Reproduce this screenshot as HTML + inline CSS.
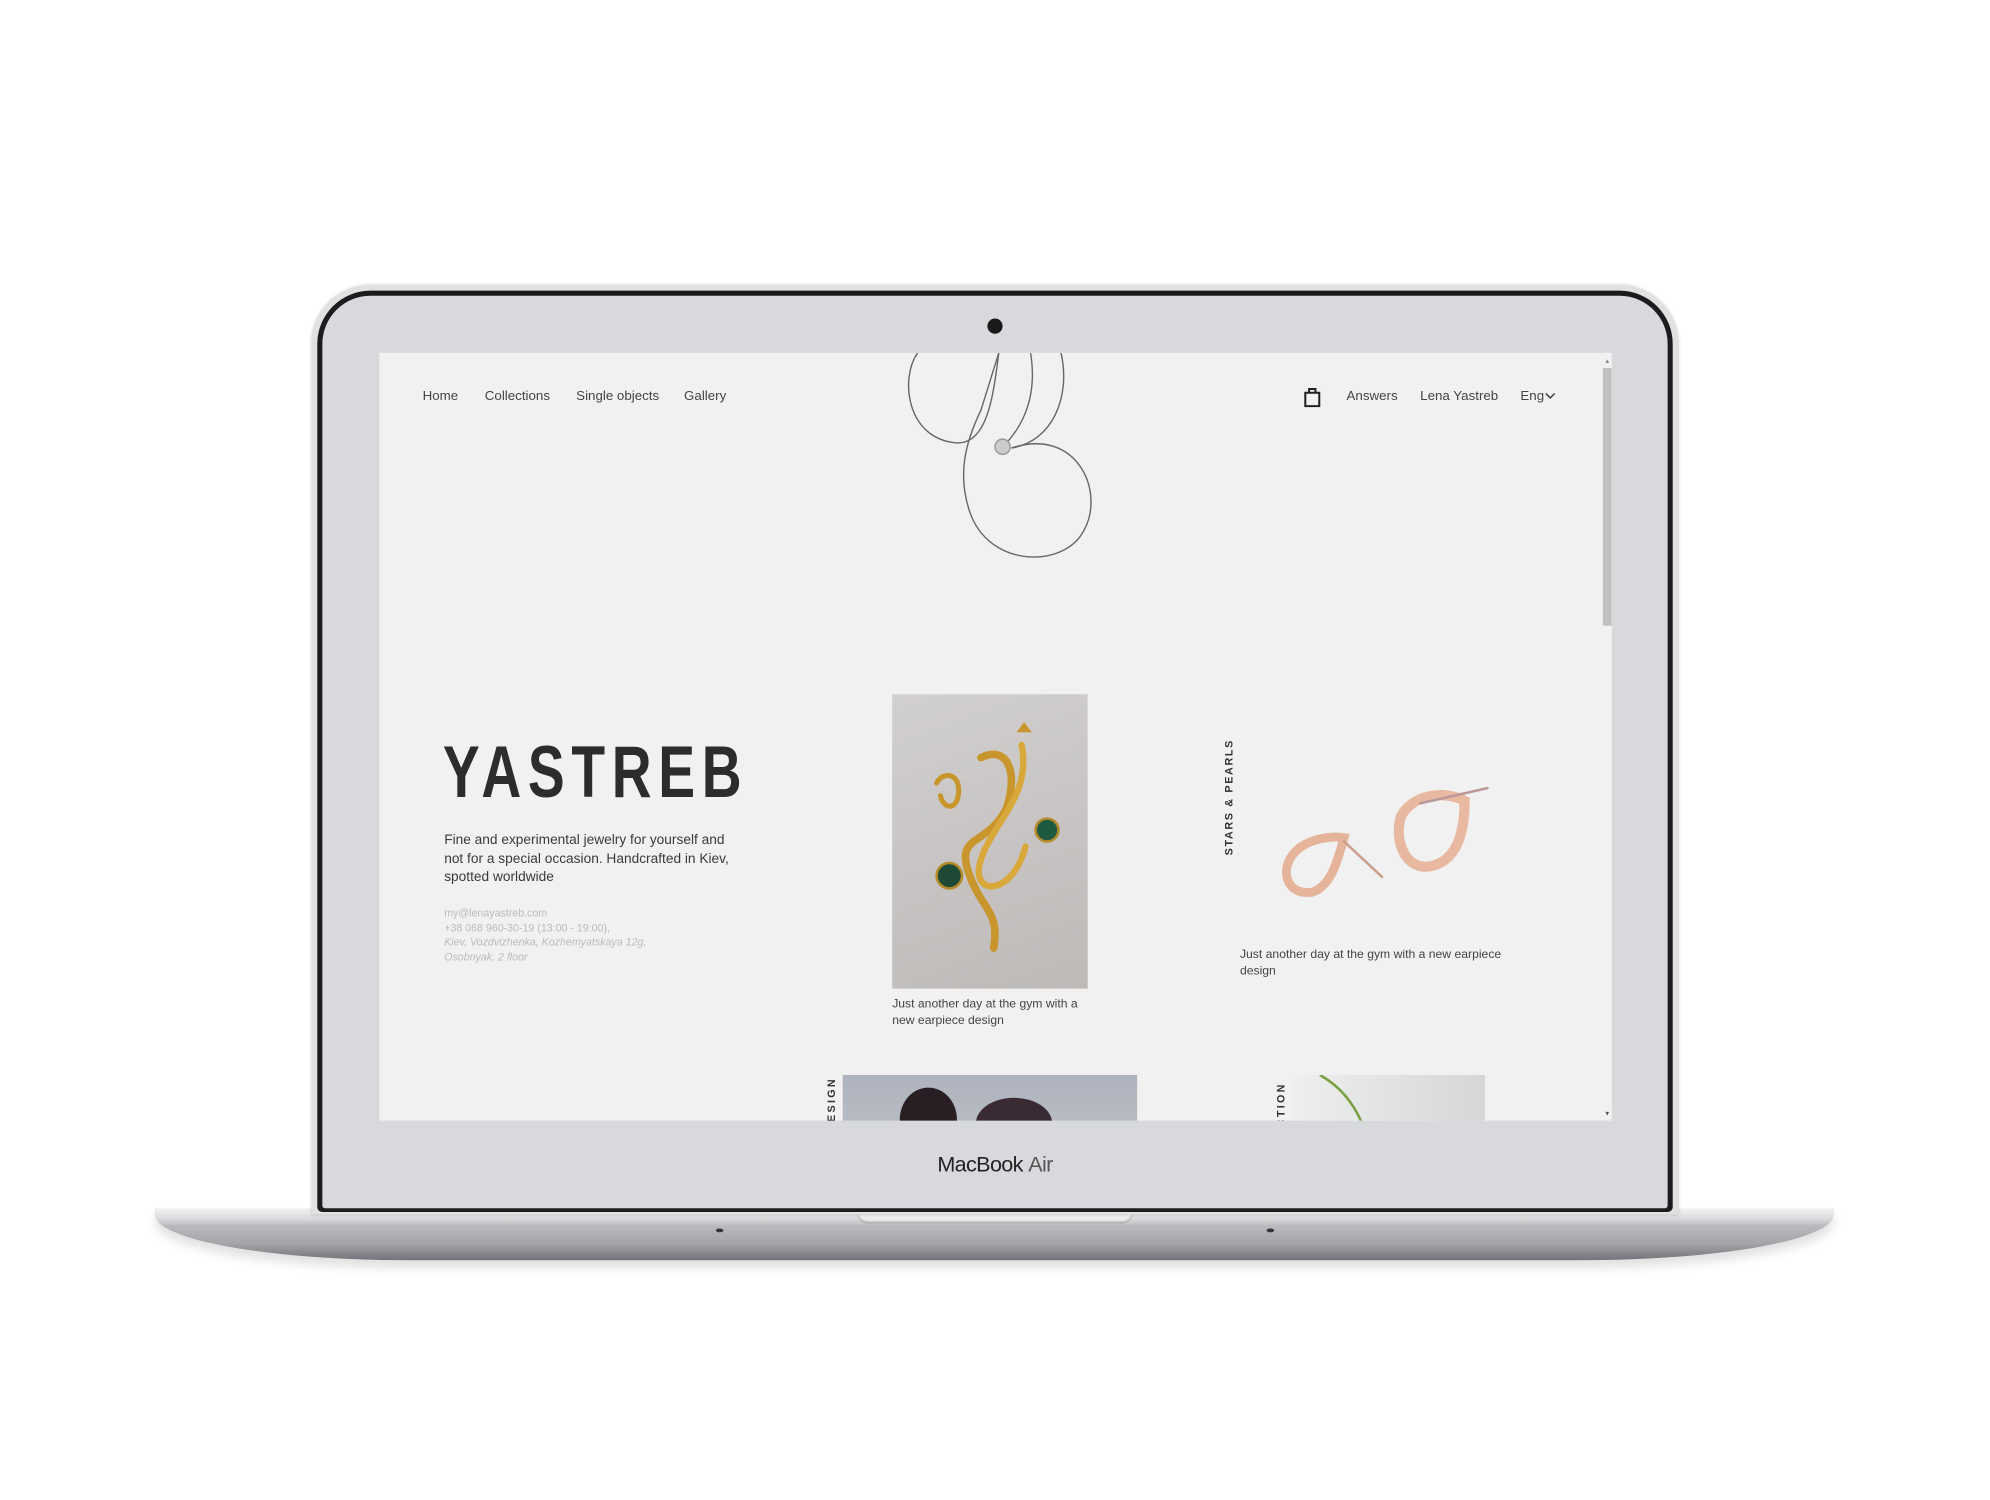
<!DOCTYPE html>
<html><head><meta charset="utf-8"><style>
html,body{margin:0;padding:0;background:#fff;width:1990px;height:1500px;overflow:hidden}
#s{position:absolute;left:0;top:0;width:1568px;height:1182px;transform:scale(1.26913);transform-origin:0 0;font-family:"Liberation Sans",sans-serif}
.a{position:absolute}
.nav{font-size:10.5px;color:#444;top:306px}
.vt{position:absolute;transform:rotate(-90deg);transform-origin:0 0;font-size:8.5px;font-weight:bold;letter-spacing:1.8px;color:#333;white-space:nowrap}
</style></head><body><div id="s">
<div class="a" style="left:122px;top:952px;width:1323px;height:41px;border-radius:0 0 200px 200px/0 0 36px 36px;background:linear-gradient(#f2f2f3 0,#dcdcde 8px,#b9babe 14px,#a4a5a9 28px,#737479 41px);box-shadow:0 6px 8px rgba(0,0,0,.12)"></div>
<div class="a" style="left:675px;top:955px;width:218px;height:9px;border-radius:0 0 10px 10px;background:linear-gradient(#fff,#e4e4e6);box-shadow:inset 0 -1px 2px #999"></div>
<div class="a" style="left:564px;top:968px;width:6px;height:3px;border-radius:50%;background:#333"></div>
<div class="a" style="left:998px;top:968px;width:6px;height:3px;border-radius:50%;background:#333"></div>
<div class="a" style="left:246px;top:225px;width:1076px;height:732px;border-radius:46px 46px 0 0;background:#e1e1e3;box-shadow:0 0 3px #bbb"></div>
<div class="a" style="left:250px;top:229px;width:1068px;height:726px;border-radius:42px 42px 4px 4px;background:#1c1c1e"></div>
<div class="a" style="left:254px;top:233px;width:1060px;height:719px;border-radius:38px 38px 2px 2px;background:#d8d9dc"></div>
<div class="a" style="left:778px;top:251px;width:12px;height:12px;border-radius:50%;background:#1a1a1a"></div>
<div class="a" style="left:0;top:908px;width:1568px;text-align:center;font-size:17px;color:#222;letter-spacing:-.5px">MacBook <span style="color:#555;font-weight:300">Air</span></div>
<div class="a" style="left:299px;top:278px;width:971px;height:605px;background:#f1f1f1;overflow:hidden">
 <div class="a" style="left:964px;top:12px;width:7px;height:203px;background:#c1c1c1"></div>
 <div class="a" style="left:965px;top:4px;font-size:5px;color:#888">▲</div>
 <div class="a" style="left:965px;top:597px;font-size:5px;color:#555">▼</div>
 <div class="a nav" style="left:34px;top:28px">Home</div>
 <div class="a nav" style="left:83px;top:28px">Collections</div>
 <div class="a nav" style="left:155px;top:28px">Single objects</div>
 <div class="a nav" style="left:240px;top:28px">Gallery</div>
 <svg class="a" style="left:728px;top:26px" width="14" height="17" viewBox="0 0 14 17"><path d="M1.5 5.5h11v10.5h-11z M4.5 5.5V2.5h5v3" fill="none" stroke="#222" stroke-width="1.6"/></svg>
 <div class="a nav" style="left:762px;top:28px">Answers</div>
 <div class="a nav" style="left:820px;top:28px">Lena Yastreb</div>
 <div class="a nav" style="left:899px;top:28px">Eng</div>
 <svg class="a" style="left:918px;top:31px" width="9" height="6"><path d="M1 1l3.5 3.5L8 1" fill="none" stroke="#444" stroke-width="1.2"/></svg>
 <svg class="a" style="left:400px;top:0" width="180" height="170" fill="none" stroke="#666" stroke-width="1.1">
  <path d="M24 0C10 20 15 68 55 71C80 72 84 30 88 0"/>
  <path d="M113 0C118 30 110 55 92 73"/>
  <path d="M137 0C145 35 130 70 98 75C150 58 172 110 155 140C140 170 80 170 65 125C55 95 62 70 74 45L88 0"/>
  <circle cx="91" cy="74" r="6" fill="#ccc" stroke="#999"/>
 </svg>
 <div class="a" style="left:50px;top:296px;font-size:58px;font-weight:bold;color:#2c2c2c;letter-spacing:7px;transform:scaleX(.75);transform-origin:0 0;line-height:70px">YASTREB</div>
 <div class="a" style="left:51px;top:377px;width:234px;font-size:10.8px;line-height:14.6px;color:#3a3a3a">Fine and experimental jewelry for yourself and not for a special occasion. Handcrafted in Kiev, spotted worldwide</div>
 <div class="a" style="left:51px;top:436px;font-size:8.4px;line-height:11.7px;color:#bbb">my@lenayastreb.com<br>+38 068 960-30-19 (13:00 - 19:00),<br><i>Kiev, Vozdvizhenka, Kozhemyatskaya 12g,<br>Osobnyak, 2 floor</i></div>
 <div class="a" style="left:404px;top:269px;width:154px;height:232px;background:linear-gradient(160deg,#d2d0cf,#c5c2c1 60%,#bdbab8)">
  <svg width="154" height="232" fill="none" stroke-linecap="round">
   <path d="M70 50C90 40 100 60 90 90C75 120 50 110 60 140C70 170 85 170 80 200" stroke="#c9962d" stroke-width="6"/>
   <path d="M102 40C110 80 80 100 70 130C60 160 95 160 105 120" stroke="#d8a83a" stroke-width="5"/>
   <path d="M35 70C40 60 55 62 52 80C50 92 40 90 38 80" stroke="#c9962d" stroke-width="4"/>
   <circle cx="45" cy="143" r="10" fill="#1e4a35" stroke="#b48a2a" stroke-width="2"/>
   <circle cx="122" cy="107" r="9" fill="#1f5a40" stroke="#b48a2a" stroke-width="2"/>
   <path d="M98 30l6 -8 6 8z" fill="#c9962d" stroke="none"/>
  </svg>
 </div>
 <div class="a" style="left:404px;top:508px;width:160px;font-size:9.6px;line-height:12.5px;color:#444">Just another day at the gym with a new earpiece design</div>
 <div class="vt" style="left:664px;top:396px;letter-spacing:1.3px">STARS &amp; PEARLS</div>
 <svg class="a" style="left:705px;top:335px" width="180" height="100" fill="none" stroke-linecap="round">
  <path d="M10 70C15 50 40 45 55 47C50 65 45 85 30 90C15 92 8 82 10 70z" stroke="#e6b49b" stroke-width="7"/>
  <path d="M55 50L85 78" stroke="#caa08c" stroke-width="2"/>
  <path d="M100 30C95 45 100 70 120 70C140 68 150 50 150 18C135 10 110 12 100 30z" stroke="#e8b8a0" stroke-width="8"/>
  <path d="M115 20L168 8" stroke="#b99" stroke-width="2"/>
 </svg>
 <div class="a" style="left:678px;top:469px;width:225px;font-size:9.6px;line-height:12.5px;color:#444">Just another day at the gym with a new earpiece design</div>
 <div class="a" style="left:365px;top:569px;width:232px;height:40px;background:linear-gradient(#aeb3bd,#b7bbc3)">
  <div class="a" style="left:45px;top:10px;width:45px;height:50px;border-radius:50% 50% 0 0;background:#2a1e25"></div>
  <div class="a" style="left:105px;top:18px;width:60px;height:40px;border-radius:50%;background:#3a2a33"></div>
 </div>
 <div class="vt" style="left:351px;top:614px">DESIGN</div>
 <div class="a" style="left:719px;top:569px;width:152px;height:40px;background:linear-gradient(90deg,#eef0ef,#d4d6d8)">
  <svg width="152" height="40"><path d="M22 0C40 10 50 25 56 40" fill="none" stroke="#7aa040" stroke-width="2"/></svg>
 </div>
 <div class="vt" style="left:705px;top:648px">COLLECTION</div>
</div>
</div></body></html>
